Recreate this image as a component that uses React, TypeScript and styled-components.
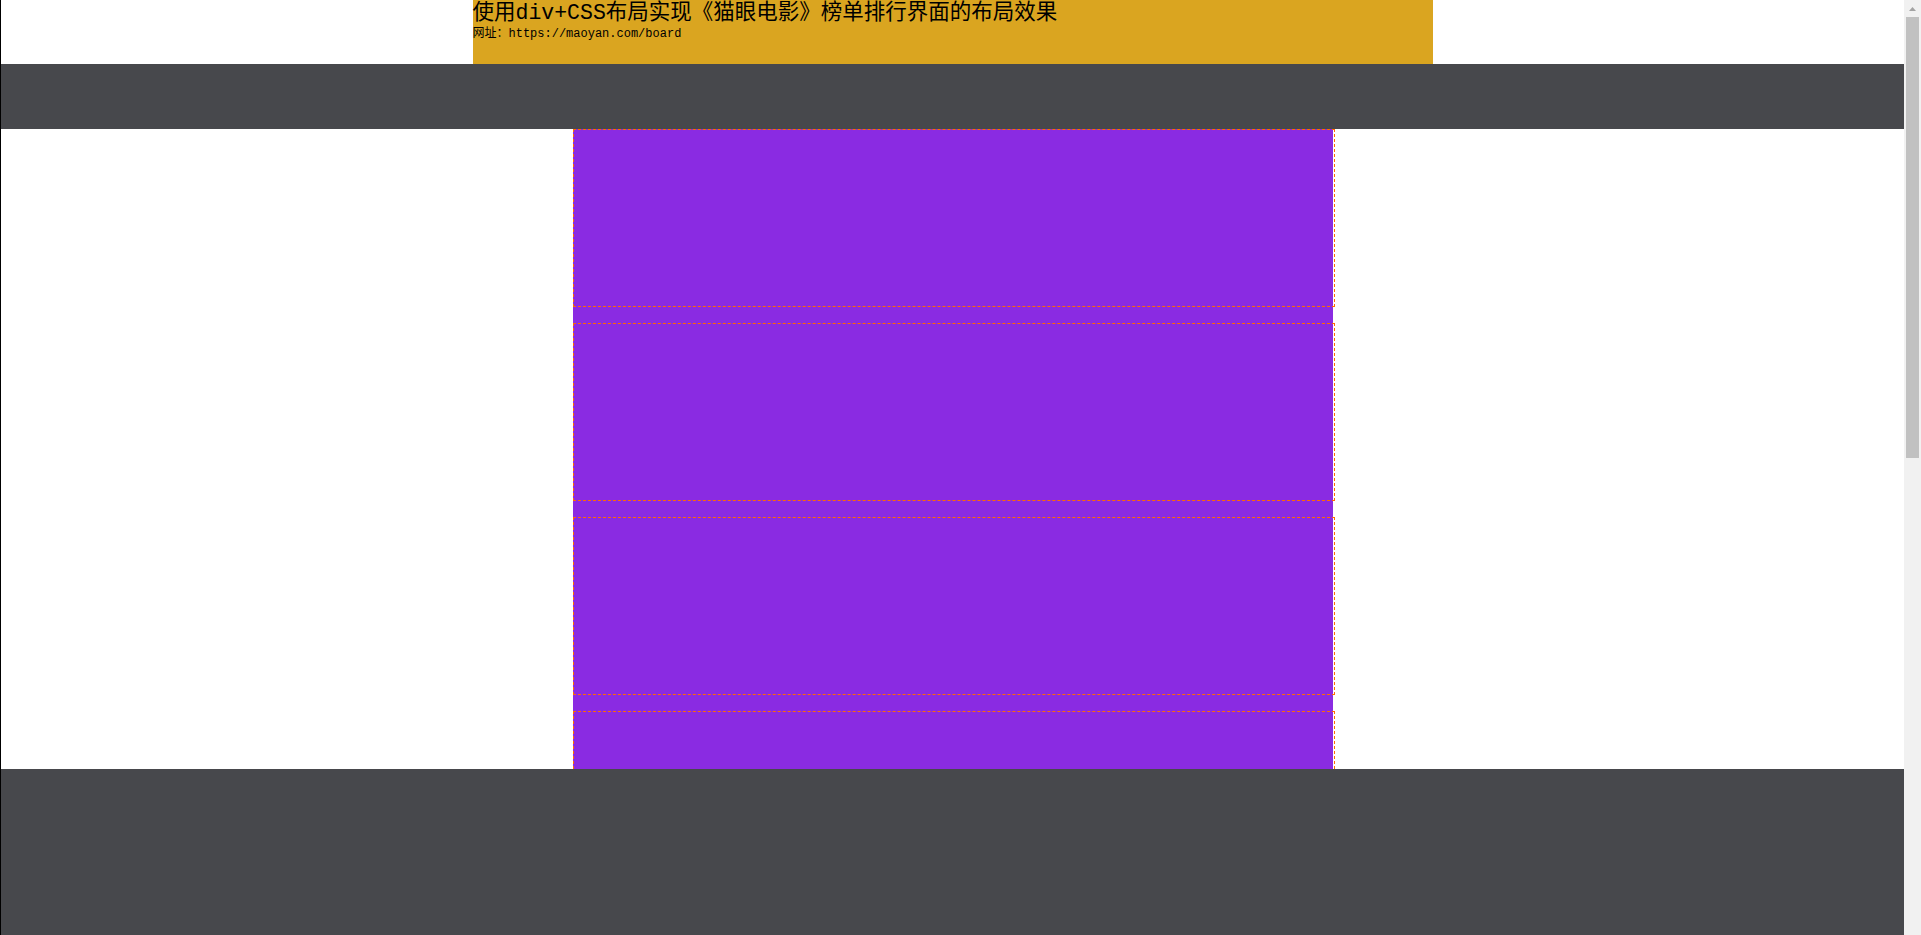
import React from "react";
import styled, { createGlobalStyle } from "styled-components";

const Global = createGlobalStyle`
  html, body { margin: 0; padding: 0; }
  html { scrollbar-width: none; }
  html::-webkit-scrollbar { display: none; }
  body {
    background: #ffffff;
    font-family: "Liberation Mono", "Noto Sans CJK SC", monospace;
    color: #000;
  }
`;

const Shell = styled.div`
  display: flex;
  align-items: flex-start;
`;

const Page = styled.div`
  flex: 1;
  min-width: 0;
  border-left: 1px solid #000;
`;

const Header = styled.header`
  width: 960px;
  height: 64px;
  margin: 0 auto;
  background: #daa520;
`;

const Title = styled.div`
  font-family: "Liberation Mono", "Noto Sans CJK SC", monospace;
  font-size: 21.5px;
  line-height: 27px;
  white-space: nowrap;
`;

const Url = styled.div`
  font-family: "Liberation Mono", "Noto Sans CJK SC", monospace;
  font-size: 12px;
  line-height: 14px;
`;

const Nav = styled.nav`
  height: 65px;
  background: #47484c;
`;

const Main = styled.main`
  width: 760px;
  height: 640px;
  margin: 0 auto;
  background: #8a2be2;
`;

const Row = styled.div`
  width: 760px;
  height: 176px;
  border: 1px dashed #ff6a00;
  margin-bottom: 16px;
`;

const Footer = styled.footer`
  height: 1141px;
  background: #47484c;
`;

const ScrollBar = styled.aside`
  position: sticky;
  top: 0;
  flex: 0 0 17px;
  width: 17px;
  height: 935px;
  background: #f1f1f1;
  display: flex;
  flex-direction: column;
  align-items: center;
`;

const ArrowButton = styled.div`
  height: 17px;
  width: 17px;
  display: flex;
  align-items: center;
  justify-content: center;
`;

const Thumb = styled.div`
  width: 13px;
  height: 441px;
  background: #c1c1c1;
`;

export default function App() {
  return (
    <>
      <Global />
      <Shell>
        <Page>
          <Header>
            <Title>使用div+CSS布局实现《猫眼电影》榜单排行界面的布局效果</Title>
            <Url>网址：https://maoyan.com/board</Url>
          </Header>
          <Nav />
          <Main>
            {[0, 1, 2, 3].map((i) => (
              <Row key={i} />
            ))}
          </Main>
          <Footer />
        </Page>
        <ScrollBar>
          <ArrowButton>
            <svg width="7" height="4" viewBox="0 0 7 4">
              <polygon points="0,4 7,4 3.5,0" fill="#a3a3a3" />
            </svg>
          </ArrowButton>
          <Thumb />
        </ScrollBar>
      </Shell>
    </>
  );
}
